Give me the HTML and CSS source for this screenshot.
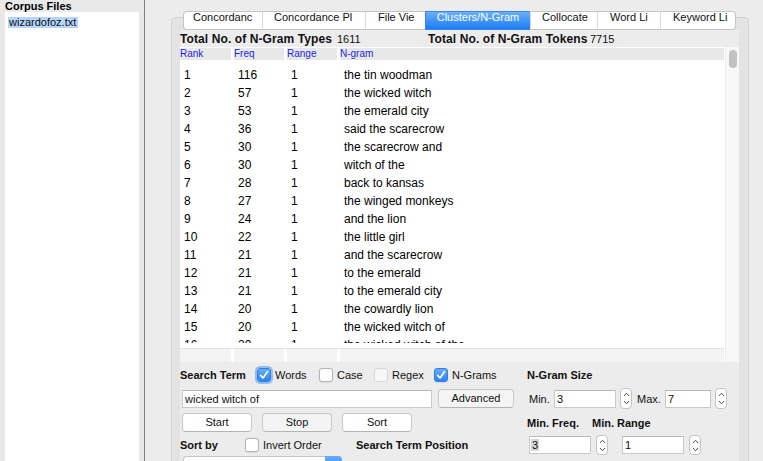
FILE: index.html
```html
<!DOCTYPE html>
<html>
<head>
<meta charset="utf-8">
<title>AntConc</title>
<link rel="stylesheet" href="styles.css">
</head>
<body>
<div class="app">
  <aside class="corpus">
    <div class="corpus-title">Corpus Files</div>
    <div class="corpus-list"><span class="file">wizardofoz.txt</span></div>
  </aside>
  <div class="divider"></div>
  <main class="main">
    <section class="pane">
      <nav class="tabs">
        <div class="tab t1"><span>Concordanc</span></div>
        <div class="tab t2"><span>Concordance Pl</span></div>
        <div class="tab t3"><span>File Vie</span></div>
        <div class="tab t4 active"><span>Clusters/N-Gram</span></div>
        <div class="tab t5"><span>Collocate</span></div>
        <div class="tab t6"><span>Word Li</span></div>
        <div class="tab t7"><span>Keyword Li</span></div>
      </nav>
      <div class="content">
        <div class="stats"><b class="s-l1">Total No. of N-Gram Types</b><span class="s-n1">1611</span><b class="s-l2">Total No. of N-Gram Tokens</b><span class="s-n2">7715</span></div>
        <div class="table">
          <div class="grid">
            <div class="row thead"><span>Rank</span><span>Freq</span><span>Range</span><span>N-gram</span></div>
            <div class="tbody">
              <div class="row"><span>1</span><span>116</span><span>1</span><span>the tin woodman</span></div>
              <div class="row"><span>2</span><span>57</span><span>1</span><span>the wicked witch</span></div>
              <div class="row"><span>3</span><span>53</span><span>1</span><span>the emerald city</span></div>
              <div class="row"><span>4</span><span>36</span><span>1</span><span>said the scarecrow</span></div>
              <div class="row"><span>5</span><span>30</span><span>1</span><span>the scarecrow and</span></div>
              <div class="row"><span>6</span><span>30</span><span>1</span><span>witch of the</span></div>
              <div class="row"><span>7</span><span>28</span><span>1</span><span>back to kansas</span></div>
              <div class="row"><span>8</span><span>27</span><span>1</span><span>the winged monkeys</span></div>
              <div class="row"><span>9</span><span>24</span><span>1</span><span>and the lion</span></div>
              <div class="row"><span>10</span><span>22</span><span>1</span><span>the little girl</span></div>
              <div class="row"><span>11</span><span>21</span><span>1</span><span>and the scarecrow</span></div>
              <div class="row"><span>12</span><span>21</span><span>1</span><span>to the emerald</span></div>
              <div class="row"><span>13</span><span>21</span><span>1</span><span>to the emerald city</span></div>
              <div class="row"><span>14</span><span>20</span><span>1</span><span>the cowardly lion</span></div>
              <div class="row"><span>15</span><span>20</span><span>1</span><span>the wicked witch of</span></div>
              <div class="row"><span>16</span><span>20</span><span>1</span><span>the wicked witch of the</span></div>
            </div>
            <div class="row tfoot"><span></span><span></span><span></span><span></span></div>
          </div>
          <div class="scroll"><div class="thumb"></div></div>
        </div>
        <div class="controls">
          <div class="crow ra">
            <span class="lbl w-st">Search Term</span>
            <span class="chk g1"><span class="cb on focus"><svg width="12" height="12" viewBox="0 0 12 12"><path d="M2.6 6.4 L5 9 L9.6 2.6" fill="none" stroke="#fff" stroke-width="1.7" stroke-linecap="round" stroke-linejoin="round"/></svg></span>Words</span>
            <span class="chk g2"><span class="cb"></span>Case</span>
            <span class="chk g3"><span class="cb dis"></span>Regex</span>
            <span class="chk g4"><span class="cb on"><svg width="12" height="12" viewBox="0 0 12 12"><path d="M2.6 6.4 L5 9 L9.6 2.6" fill="none" stroke="#fff" stroke-width="1.7" stroke-linecap="round" stroke-linejoin="round"/></svg></span>N-Grams</span>
            <span class="lbl">N-Gram Size</span>
          </div>
          <div class="crow rb">
            <span class="field f-search">wicked witch of</span>
            <span class="btn adv">Advanced</span>
            <span class="minl">Min.</span>
            <span class="field f-min">3</span>
            <span class="spin sp-b"><svg width="7" height="5" viewBox="0 0 7 5"><path d="M1 4 L3.5 1.2 L6 4" fill="none" stroke="#555" stroke-width="1"/></svg><svg width="7" height="5" viewBox="0 0 7 5"><path d="M1 1 L3.5 3.8 L6 1" fill="none" stroke="#555" stroke-width="1"/></svg></span>
            <span class="maxl">Max.</span>
            <span class="field f-max">7</span>
            <span class="spin sp-b"><svg width="7" height="5" viewBox="0 0 7 5"><path d="M1 4 L3.5 1.2 L6 4" fill="none" stroke="#555" stroke-width="1"/></svg><svg width="7" height="5" viewBox="0 0 7 5"><path d="M1 1 L3.5 3.8 L6 1" fill="none" stroke="#555" stroke-width="1"/></svg></span>
          </div>
          <div class="crow rc">
            <span class="btn b-start">Start</span>
            <span class="btn b-stop">Stop</span>
            <span class="btn b-sort">Sort</span>
            <span class="lbl mfreq">Min. Freq.</span>
            <span class="lbl">Min. Range</span>
          </div>
          <div class="crow rd">
            <span class="lbl w-sort">Sort by</span>
            <span class="chk g-inv"><span class="cb"></span>Invert Order</span>
            <span class="lbl w-stp">Search Term Position</span>
            <span class="field f-freq"><span class="sel">3</span></span>
            <span class="spin sp-d"><svg width="7" height="5" viewBox="0 0 7 5"><path d="M1 4 L3.5 1.2 L6 4" fill="none" stroke="#555" stroke-width="1"/></svg><svg width="7" height="5" viewBox="0 0 7 5"><path d="M1 1 L3.5 3.8 L6 1" fill="none" stroke="#555" stroke-width="1"/></svg></span>
            <span class="field f-range">1</span>
            <span class="spin sp-d"><svg width="7" height="5" viewBox="0 0 7 5"><path d="M1 4 L3.5 1.2 L6 4" fill="none" stroke="#555" stroke-width="1"/></svg><svg width="7" height="5" viewBox="0 0 7 5"><path d="M1 1 L3.5 3.8 L6 1" fill="none" stroke="#555" stroke-width="1"/></svg></span>
          </div>
          <div class="crow re">
            <span class="dd"><span class="dd-btn"></span></span>
          </div>
        </div>
      </div>
    </section>
  </main>
</div>
</body>
</html>
```

FILE: styles.css
```css
* { box-sizing: border-box; margin: 0; padding: 0; }
html, body { width: 763px; height: 461px; overflow: hidden; }
body {
  background: #ececec;
  font-family: "Liberation Sans", Arial, sans-serif;
  font-size: 11px;
  color: #111;
}
.app { display: flex; height: 461px; }

/* left corpus panel */
.corpus {
  width: 144px; flex: none;
  display: flex; flex-direction: column;
  padding: 0 5px;
  background: #e9e9e9;
}
.corpus-title { height: 12px; line-height: 12px; font-weight: bold; font-size: 11px; color: #000; }
.corpus-list { flex: 1; background: #fff; padding: 5px 0 0 3px; }
.file {
  display: inline-block; vertical-align: top;
  height: 11px; line-height: 11px;
  padding: 0 2px 0 1px;
  background: #b5d5fd;
  color: #111;
}
.divider { width: 1px; flex: none; background: #7e7e7e; }

/* main area */
.main { flex: 1; display: flex; padding: 17px 14px 0 26px; }
.pane {
  flex: 1; display: flex; flex-direction: column;
  background: #e3e3e3;
  border: 1px solid #d3d3d3; border-bottom: none;
  border-radius: 5px 5px 0 0;
  padding: 0 9px 0 8px;
}

/* tabs */
.tabs { display: flex; justify-content: center; height: 19px; margin-top: -7px; flex: none; }
.tab {
  height: 19px;
  background: #fff;
  border: 1px solid #c4c4c4;
  border-left-color: #d9d9d9;
  border-right: none;
  line-height: 10px;
  font-size: 11px;
  color: #111;
  white-space: nowrap;
}
.tab span { display: block; white-space: nowrap; }
.t1 { width: 79px; padding: 0 0 0 9px; border-left-color: #c4c4c4; border-radius: 4px 0 0 4px; }
.t2 { width: 103px; padding: 0 0 0 11px; }
.t3 { width: 60px; padding: 0 0 0 12px; }
.t4 { width: 105px; padding: 0; text-align: center; }
.t5 { width: 67px; padding: 0 0 0 11px; }
.t6 { width: 63px; padding: 0 0 0 12px; }
.t7 { width: 76px; padding: 0 0 0 12px; border-right: 1px solid #c4c4c4; border-radius: 0 4px 4px 0; }
.tab.active {
  background: linear-gradient(#6aaffb, #1c7cf6);
  border-color: #3787f4;
  color: #fff;
}

/* content */
.content { flex: 1; display: flex; flex-direction: column; background: #ececec; }
.stats { height: 17px; line-height: 18px; font-size: 12px; white-space: nowrap; flex: none; color: #111; }
.stats b, .stats span { display: inline-block; }
.stats b { letter-spacing: 0.1px; }
.s-l1 { width: 157px; }
.s-n1 { width: 91px; font-size: 11px; }
.s-l2 { width: 162px; }
.s-n2 { font-size: 11px; }

/* table */
.table { height: 315px; flex: none; display: flex; background: #fff; padding-top: 1px; }
.grid { width: 544px; display: flex; flex-direction: column; }
.row { display: grid; grid-template-columns: 51px 50px 50px 1fr; column-gap: 3px; }
.thead { height: 12px; line-height: 12px; font-size: 10px; color: #1e1ef0; flex: none; }
.thead span { background: #e8e8e8; }
.tbody { height: 283px; overflow: hidden; padding-top: 6px; flex: none; }
.tbody .row { height: 18px; line-height: 18px; font-size: 12px; color: #000; }
.tbody .row span { padding-left: 4px; white-space: nowrap; }
.tfoot { margin-top: 5px; height: 14px; border-top: 1px solid #e3e3e3; flex: none; }
.tfoot span { background: #f3f3f3; }
.scroll {
  width: 14px; margin-left: 1px; margin-top: -1px;
  background: #f8f8f8; border-left: 1px solid #ededed;
  padding: 3px 0 0 3px;
}
.thumb { width: 8px; height: 18px; border-radius: 4px; background: #c2c2c2; }

/* controls */
.controls { flex: 1; display: flex; flex-direction: column; }
.crow { display: flex; align-items: center; flex: none; white-space: nowrap; color: #111; }
.ra { margin-top: 4px; height: 18px; }
.rb { margin-top: 4px; height: 21px; }
.rc { margin-top: 3px; height: 21px; }
.rd { margin-top: 2px; height: 20px; }
.re { margin-top: 1px; height: 14px; align-items: flex-start; }
.lbl { font-weight: bold; }
.w-st { width: 77px; }
.chk { display: flex; align-items: center; }
.g1 { width: 62px; }
.g2 { width: 55px; }
.g3 { width: 60px; }
.g4 { width: 93px; }
.cb {
  width: 14px; height: 14px; flex: none;
  margin-right: 4px;
  border: 1px solid #b3b3b3; border-radius: 3px;
  background: #fff;
  display: flex; align-items: center; justify-content: center;
  box-shadow: 0 0.5px 1px rgba(0,0,0,0.08);
}
.cb.on { background: linear-gradient(#66acf9, #2a83f6); border-color: #2f7ee6; }
.cb.focus { box-shadow: 0 0 0 2px rgba(96, 156, 240, 0.6); }
.cb.dis { background: #f7f7f7; border-color: #d6d6d6; box-shadow: none; }

.field {
  display: block;
  height: 18px;
  background: #fff;
  border: 1px solid #c9c9c9; border-top-color: #b9b9b9;
  padding-left: 2px;
  line-height: 16px;
  font-size: 11px;
  color: #111;
}
.f-search { width: 250px; margin-left: 2px; }
.btn {
  display: block;
  height: 19px;
  border: 1px solid #c7c7c7; border-bottom-color: #b5b5b5;
  border-radius: 4px;
  background: #fff;
  text-align: center;
  line-height: 17px;
  font-size: 11px;
  color: #111;
}
.adv { width: 76px; margin-left: 6px; background: #f5f5f5; }
.minl { margin-left: 15px; width: 25px; }
.f-min { width: 62px; }
.maxl { margin-left: 5px; width: 28px; }
.f-max { width: 46px; }
.spin {
  width: 12px; flex: none;
  display: flex; flex-direction: column; align-items: center; justify-content: center;
  gap: 3px;
  border: 1px solid #c3c3c3; border-radius: 4px;
  background: #fff;
}
.sp-b { height: 21px; margin-left: 4px; }
.sp-d { height: 20px; margin-left: 5px; }

.b-start { width: 70px; margin-left: 2px; }
.b-stop { width: 70px; margin-left: 10px; background: #f4f4f4; }
.b-sort { width: 70px; margin-left: 10px; }
.mfreq { margin-left: 115px; width: 65px; }

.w-sort { width: 65px; }
.g-inv { width: 111px; }
.w-stp { width: 171px; }
.f-freq { width: 62px; margin-left: 2px; padding-left: 1px; }
.f-freq .sel { background: #d6d6d6; padding: 0 1px; }
.f-range { width: 62px; margin-left: 14px; }

.dd {
  display: flex; justify-content: flex-end;
  margin-left: 3px; width: 159px; height: 14px;
  background: #fff;
  border: 1px solid #c4c4c4; border-right: none; border-bottom: none;
  border-radius: 4px 4px 0 0;
}
.dd-btn {
  width: 17px; height: 14px; margin-top: -1px;
  background: linear-gradient(#66acf9, #3a8cf7);
  border-radius: 0 4px 0 0;
}
```
